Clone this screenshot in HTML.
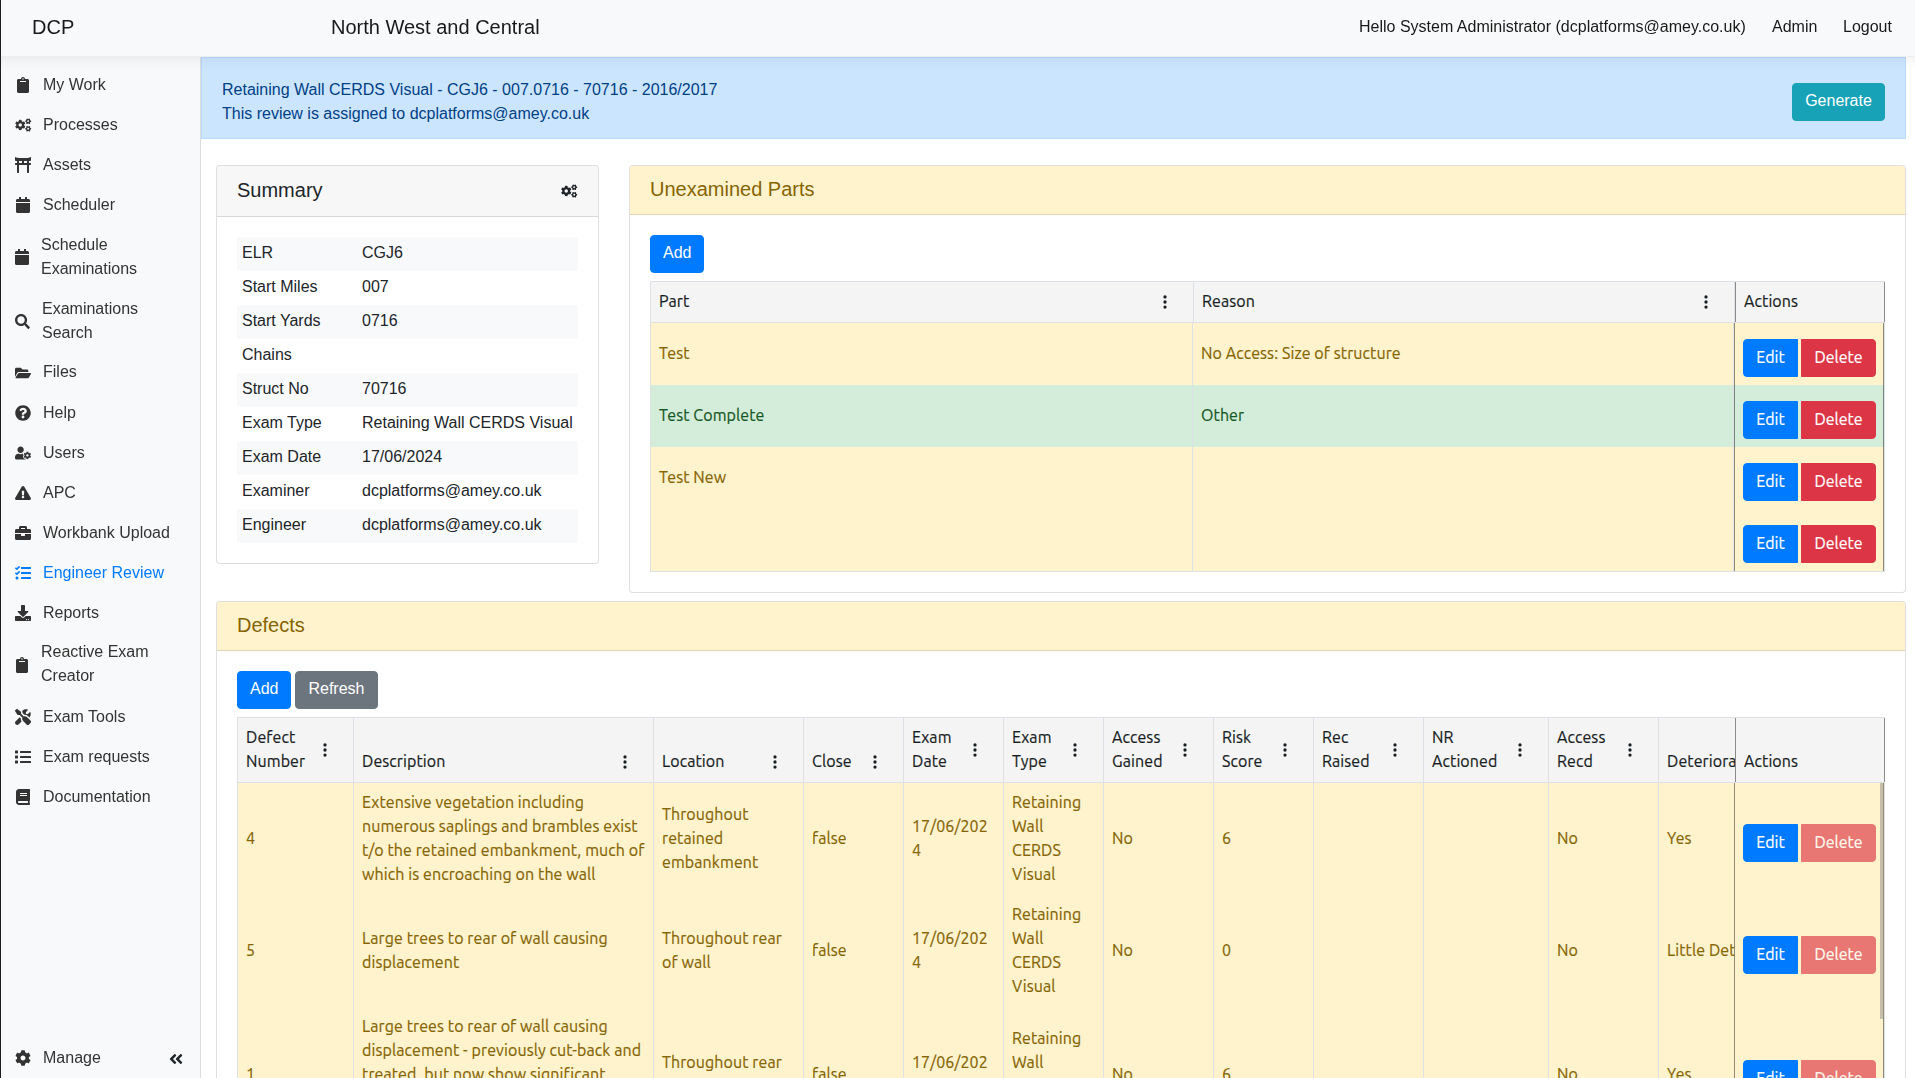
<!DOCTYPE html>
<html lang="en"><head><meta charset="utf-8"><title>DCP - Engineer Review</title>
<style>
*{box-sizing:border-box}
html,body{margin:0;padding:0}
html{overflow:hidden}
body{width:1915px;height:1078px;overflow:hidden;position:relative;background:#fff;color:#212529;
 font-family:"Liberation Sans",Arial,sans-serif;font-size:16px;line-height:24px}
#root{position:absolute;left:0;top:0;width:1915px;height:1078px;overflow:hidden}
a{text-decoration:none;color:inherit}
#edge{position:absolute;left:0;top:0;width:1px;height:1078px;background:#1f1f1f;z-index:30}
#nav{will-change:transform;position:absolute;left:-39px;top:0;width:1994px;height:57px;border-bottom:1px solid #eceef0;background:#f8f9fa;z-index:20;
 box-shadow:0 4px 12px rgba(0,0,0,.055)}
#nav>*{position:absolute;white-space:nowrap}
.brand{left:71px;top:12px;font-size:20px;line-height:30px;color:rgba(0,0,0,.9)}
.region{left:370px;top:12px;font-size:20px;line-height:30px;color:rgba(0,0,0,.9)}
.hello{left:1398px;top:15px;color:rgba(0,0,0,.9)}
.nl{top:15px;color:rgba(0,0,0,.9);margin-left:-1px}
#side{will-change:transform;position:absolute;left:1px;top:56px;width:200px;height:1022px;background:#f8f9fa;border-right:1px solid #dcdddf;z-index:5}
.ni{position:absolute;left:0;width:199px;display:block;color:#333}
svg{overflow:visible}
.ni .ic{position:absolute;left:14px;top:50%;margin-top:-7px;width:16px;height:16px;fill:#333}
.ni span{position:absolute;left:42px;top:9px;white-space:nowrap}
.ni.two .ic{left:13px}
.ni.two span{left:40px}
.ni.act{color:#007bff}
.ni.act .ic{fill:#007bff}
.coll{position:absolute;left:167px;top:995px;width:16px;height:16px;fill:#212529}
#main{position:absolute;left:0;top:0;width:1915px;height:1078px}
#alert{position:absolute;left:201px;top:57px;width:1705px;height:82px;background:#cce5ff;border:1px solid #b8daff;color:#004085}
#alert .tx{position:absolute;left:20px;top:20px;white-space:nowrap}
.btn{display:inline-block;font:inherit;font-size:16px;line-height:24px;padding:5px 12px 7px;border:1px solid transparent;border-radius:4px;color:#fff;text-align:center;vertical-align:middle;white-space:nowrap;margin:0}
.bp{background:#007bff;border-color:#007bff}
.bd{background:#dc3545;border-color:#dc3545}
.bi{background:#17a2b8;border-color:#17a2b8}
.bs{background:#6c757d;border-color:#6c757d}
.dis{opacity:.65}
#alert .bi{position:absolute;left:1590px;top:25px;width:93px;height:38px}
.card{position:absolute;background:#fff;border:1px solid rgba(0,0,0,.125);border-radius:4px}
.ch{height:49px;padding:12px 20px;background:rgba(0,0,0,.03);border-bottom:1px solid rgba(0,0,0,.125);border-radius:3px 3px 0 0;position:relative}
.ch h5{margin:0;font-size:20px;line-height:24px;font-weight:500}
.cb{padding:20px;position:relative}
.warn .ch{background:#fff3cd;color:#856404;padding-top:11px}
#summary{left:216px;top:165px;width:383px;height:399px}
#summary .ch{height:51px}
.hcog{position:absolute;right:21px;top:17px;width:16px;height:16px;fill:#212529}
#summary table{border-collapse:collapse;width:341px}
#summary td{height:34px;padding:4px 5px 6px;vertical-align:middle;white-space:nowrap}
#summary td.k{width:120px}
#summary tr:nth-child(odd){background:#f8f9fa}
#unex{left:629px;top:165px;width:1277px;height:428px}
#defects{left:216px;top:601px;width:1690px;height:600px}
.grid{position:relative;margin-top:8px;border:1px solid #dde1e6;font-family:Ubuntu,"Liberation Sans",sans-serif;font-size:16px;line-height:24px;background:#fff;letter-spacing:.09px;-webkit-text-stroke:.2px}
#g1{width:1235px;height:291px}
#g2{width:1648px;height:500px}
.hd{position:absolute;left:0;top:0;background:#f4f4f4;border-bottom:1px solid #dde1e6;color:#181d1f;z-index:3}
.h{position:absolute;top:0;bottom:0;border-right:1px solid #dde1e6;overflow:hidden}
.h .t{position:absolute;left:8px;bottom:9px;white-space:nowrap}
.mn{position:absolute;right:25.7px;width:4px;height:14px;fill:#181d1f;bottom:13px}
.mn.m2{bottom:25px}
.r{position:absolute;left:0;background:#fff3cd;color:#856404}
.r.ok{background:#d4edda;color:#155724}
.c{position:absolute;top:0;bottom:0;border-right:1px solid #dde1e6;overflow:hidden;display:flex;align-items:center;padding:0 8px 2px}
.c span{white-space:nowrap}
.pin{position:absolute;right:0;top:0;bottom:0;width:150px;border-left:1px solid rgba(0,0,0,.43);border-right:1px solid rgba(0,0,0,.43);background:inherit;display:flex;align-items:center;padding-left:8px;padding-top:8px;font-size:0;z-index:2}
.pin .btn{font-family:inherit;height:38px;padding-top:5px;padding-bottom:7px}
.pin .bp{width:55px;border-radius:4px 0 0 4px;padding-left:0;padding-right:0}
.pin .bd{width:75px;border-radius:0 4px 4px 0;margin-left:3px;padding-left:0;padding-right:0}
.pinh{left:auto;right:0;width:150px;border-left:1px solid rgba(0,0,0,.43);border-right:1px solid rgba(0,0,0,.43);background:#f4f4f4}
.thumb{position:absolute;left:1642px;top:65px;width:3px;height:236px;background:rgba(128,128,128,.45);z-index:4}

</style></head>
<body>
<div id="root">
<div id="edge"></div>
<nav id="nav">
<a class="brand">DCP</a>
<span class="region">North West and Central</span>
<span class="hello">Hello System Administrator (dcplatforms@amey.co.uk)</span>
<a class="nl" style="left:1812px">Admin</a>
<a class="nl" style="left:1883px">Logout</a>
</nav>
<aside id="side">
<a class="ni" style="top:8px;height:40px"><svg class="ic" viewBox="0 0 384 512"><path d="M384 112v352c0 26.51-21.49 48-48 48H48c-26.51 0-48-21.49-48-48V112c0-26.51 21.49-48 48-48h80c0-35.29 28.71-64 64-64s64 28.71 64 64h80c26.51 0 48 21.49 48 48zM192 40c-13.255 0-24 10.745-24 24s10.745 24 24 24 24-10.745 24-24-10.745-24-24-24m96 114v-20a6 6 0 0 0-6-6H102a6 6 0 0 0-6 6v20a6 6 0 0 0 6 6h180a6 6 0 0 0 6-6z"/></svg><span>My Work</span></a>
<a class="ni" style="top:48px;height:40px"><svg class="ic" viewBox="0 0 640 512"><g transform="translate(-6 40) scale(.845)"><path d="M487.4 315.7l-42.6-24.6c4.3-23.2 4.3-47 0-70.2l42.6-24.6c4.9-2.8 7.1-8.6 5.5-14-11.1-35.600-30-67.800-54.7-94.600-3.800-4.100-10-5.100-14.800-2.300L380.800 110c-17.900-15.400-38.500-27.300-60.800-35.100V25.800c0-5.600-3.900-10.500-9.400-11.700-36.700-8.200-74.300-7.800-109.200 0-5.500 1.200-9.400 6.100-9.400 11.700V75c-22.200 7.900-42.800 19.800-60.800 35.100L88.700 85.500c-4.900-2.800-11-1.900-14.800 2.300-24.700 26.700-43.600 58.900-54.700 94.600-1.700 5.400.6 11.200 5.500 14L67.300 221c-4.300 23.200-4.300 47 0 70.200l-42.600 24.600c-4.900 2.800-7.100 8.600-5.500 14 11.100 35.600 30 67.800 54.700 94.600 3.800 4.100 10 5.100 14.800 2.300l42.600-24.600c17.900 15.400 38.500 27.300 60.800 35.100v49.200c0 5.600 3.900 10.500 9.400 11.700 36.700 8.200 74.300 7.800 109.200 0 5.500-1.200 9.400-6.100 9.400-11.700v-49.200c22.200-7.900 42.800-19.800 60.800-35.100l42.600 24.600c4.900 2.800 11 1.900 14.800-2.300 24.700-26.700 43.600-58.900 54.700-94.600 1.500-5.500-.7-11.300-5.600-14.100zM256 336c-44.100 0-80-35.900-80-80s35.900-80 80-80 80 35.900 80 80-35.900 80-80 80z"/></g><g transform="translate(407.3 -12.7) scale(.474) rotate(90 256 256)"><path d="M487.4 315.7l-42.6-24.6c4.3-23.2 4.3-47 0-70.2l42.6-24.6c4.9-2.8 7.1-8.6 5.5-14-11.1-35.600-30-67.800-54.7-94.600-3.800-4.100-10-5.100-14.800-2.300L380.800 110c-17.900-15.400-38.500-27.300-60.800-35.100V25.800c0-5.600-3.900-10.500-9.400-11.700-36.700-8.200-74.300-7.800-109.200 0-5.500 1.200-9.400 6.100-9.400 11.700V75c-22.200 7.900-42.800 19.800-60.800 35.100L88.700 85.500c-4.900-2.800-11-1.900-14.800 2.300-24.700 26.700-43.600 58.900-54.700 94.600-1.700 5.400.6 11.200 5.500 14L67.300 221c-4.300 23.200-4.300 47 0 70.200l-42.600 24.600c-4.900 2.800-7.100 8.600-5.500 14 11.100 35.600 30 67.800 54.700 94.600 3.800 4.100 10 5.100 14.800 2.300l42.600-24.600c17.900 15.400 38.500 27.300 60.800 35.100v49.200c0 5.600 3.900 10.500 9.400 11.700 36.700 8.200 74.300 7.800 109.200 0 5.500-1.200 9.400-6.100 9.400-11.700v-49.200c22.200-7.900 42.800-19.800 60.800-35.100l42.600 24.600c4.900 2.800 11 1.900 14.800-2.300 24.700-26.700 43.600-58.900 54.700-94.600 1.500-5.500-.7-11.300-5.600-14.100zM256 336c-44.100 0-80-35.900-80-80s35.900-80 80-80 80 35.900 80 80-35.900 80-80 80z"/></g><g transform="translate(407.3 283.3) scale(.474) rotate(90 256 256)"><path d="M487.4 315.7l-42.6-24.6c4.3-23.2 4.3-47 0-70.2l42.6-24.6c4.9-2.8 7.1-8.6 5.5-14-11.1-35.600-30-67.800-54.7-94.600-3.800-4.100-10-5.100-14.800-2.300L380.800 110c-17.900-15.400-38.500-27.300-60.800-35.100V25.800c0-5.600-3.900-10.500-9.400-11.700-36.700-8.200-74.300-7.800-109.200 0-5.500 1.200-9.400 6.100-9.400 11.700V75c-22.200 7.900-42.800 19.800-60.800 35.100L88.700 85.500c-4.900-2.800-11-1.900-14.800 2.300-24.700 26.700-43.600 58.900-54.700 94.600-1.700 5.400.6 11.200 5.500 14L67.300 221c-4.300 23.200-4.300 47 0 70.200l-42.600 24.600c-4.900 2.800-7.100 8.600-5.500 14 11.100 35.600 30 67.800 54.700 94.600 3.800 4.100 10 5.100 14.800 2.300l42.600-24.600c17.900 15.400 38.500 27.300 60.800 35.100v49.200c0 5.600 3.900 10.500 9.400 11.700 36.700 8.200 74.300 7.800 109.200 0 5.500-1.200 9.400-6.100 9.400-11.700v-49.200c22.200-7.900 42.800-19.800 60.800-35.100l42.600 24.600c4.900 2.800 11 1.900 14.800-2.300 24.700-26.700 43.600-58.900 54.700-94.600 1.500-5.500-.7-11.300-5.600-14.100zM256 336c-44.100 0-80-35.900-80-80s35.900-80 80-80 80 35.900 80 80-35.900 80-80 80z"/></g></svg><span>Processes</span></a>
<a class="ni" style="top:88px;height:40px"><svg class="ic" viewBox="0 0 512 512"><path d="M376.45 32h-240.9A303.17 303.17 0 0 1 0 0v96c0 17.67 14.33 32 32 32h32v64H16c-8.84 0-16 7.16-16 16v32c0 8.84 7.16 16 16 16h48v240c0 8.84 7.16 16 16 16h32c8.84 0 16-7.16 16-16V256h256v240c0 8.84 7.16 16 16 16h32c8.84 0 16-7.16 16-16V256h48c8.84 0 16-7.16 16-16v-32c0-8.84-7.16-16-16-16h-48v-64h32c17.67 0 32-14.33 32-32V0a303.17 303.17 0 0 1-135.55 32zM128 128h96v64h-96v-64zm256 64h-96v-64h96v64z"/></svg><span>Assets</span></a>
<a class="ni" style="top:128px;height:40px"><svg class="ic" viewBox="0 0 448 512"><path d="M12 192h424c6.6 0 12 5.4 12 12v260c0 26.5-21.5 48-48 48H48c-26.5 0-48-21.5-48-48V204c0-6.6 5.4-12 12-12zm436-44v-36c0-26.5-21.5-48-48-48h-48V12c0-6.6-5.4-12-12-12h-40c-6.6 0-12 5.4-12 12v52H160V12c0-6.6-5.4-12-12-12h-40c-6.6 0-12 5.4-12 12v52H48C21.5 64 0 85.5 0 112v36c0 6.6 5.4 12 12 12h424c6.6 0 12-5.4 12-12z"/></svg><span>Scheduler</span></a>
<a class="ni two" style="top:168px;height:64px"><svg class="ic" viewBox="0 0 448 512"><path d="M12 192h424c6.6 0 12 5.4 12 12v260c0 26.5-21.5 48-48 48H48c-26.5 0-48-21.5-48-48V204c0-6.6 5.4-12 12-12zm436-44v-36c0-26.5-21.5-48-48-48h-48V12c0-6.6-5.4-12-12-12h-40c-6.6 0-12 5.4-12 12v52H160V12c0-6.6-5.4-12-12-12h-40c-6.6 0-12 5.4-12 12v52H48C21.5 64 0 85.5 0 112v36c0 6.6 5.4 12 12 12h424c6.6 0 12-5.4 12-12z"/></svg><span>Schedule<br>Examinations</span></a>
<a class="ni two" style="top:232px;height:64px"><svg class="ic" style="left:14px;width:14.9px;height:14.9px;margin-top:-6.3px" viewBox="0 0 512 512"><path d="M505 442.7L405.300 343c-4.500-4.500-10.600-7-17-7H372c27.600-35.300 44-79.700 44-128C416 93.100 322.900 0 208 0S0 93.100 0 208s93.100 208 208 208c48.300 0 92.700-16.400 128-44v16.300c0 6.400 2.500 12.500 7 17l99.700 99.700c9.400 9.400 24.600 9.400 33.900 0l28.300-28.300c9.400-9.400 9.400-24.600.1-34zM208 336c-70.700 0-128-57.200-128-128 0-70.700 57.200-128 128-128 70.700 0 128 57.200 128 128 0 70.700-57.200 128-128 128z"/></svg><span style="left:41px">Examinations<br>Search</span></a>
<a class="ni" style="top:296px;height:40px"><svg class="ic" viewBox="0 0 576 512"><path d="M572.694 292.093L500.27 416.248A63.997 63.997 0 0 1 444.989 448H45.025c-18.523 0-30.064-20.093-20.731-36.093l72.424-124.155A64 64 0 0 1 152 256h399.964c18.523 0 30.064 20.093 20.730 36.093zM152 224h328v-48c0-26.510-21.490-48-48-48H272l-64-64H48C21.490 64 0 85.490 0 112v278.046l69.077-118.418C86.214 242.250 117.989 224 152 224z"/></svg><span style="top:8px">Files</span></a>
<a class="ni" style="top:336px;height:40px"><svg class="ic" viewBox="0 0 512 512"><path d="M504 256c0 136.997-111.043 248-248 248S8 392.997 8 256C8 119.083 119.043 8 256 8s248 111.083 248 248zM262.655 90c-54.497 0-89.255 22.957-116.549 63.758-3.536 5.286-2.353 12.415 2.715 16.258l34.699 26.310c5.205 3.947 12.621 3.008 16.665-2.122 17.864-22.658 30.113-35.797 57.303-35.797 20.429 0 45.698 13.148 45.698 32.958 0 14.976-12.363 22.667-32.534 33.976C247.128 238.528 216 254.941 216 296v4c0 6.627 5.373 12 12 12h56c6.627 0 12-5.373 12-12v-1.333c0-28.462 83.186-29.647 83.186-106.667 0-58.002-60.165-102-116.531-102zM256 338c-25.365 0-46 20.635-46 46 0 25.364 20.635 46 46 46s46-20.636 46-46c0-25.365-20.635-46-46-46z"/></svg><span>Help</span></a>
<a class="ni" style="top:376px;height:40px"><svg class="ic" viewBox="0 0 640 512"><path d="M610.5 373.3c2.6-14.1 2.6-28.5 0-42.600l25.800-14.900c3-1.700 4.300-5.200 3.300-8.500-6.700-21.600-18.200-41.200-33.200-57.400-2.300-2.500-6-3.100-9-1.400l-25.800 14.900c-10.900-9.300-23.400-16.500-36.900-21.300v-29.800c0-3.400-2.400-6.400-5.700-7.100-22.300-5-45-4.800-66.200 0-3.300.7-5.700 3.700-5.700 7.100v29.800c-13.500 4.800-26 12-36.900 21.300l-25.800-14.900c-2.900-1.700-6.700-1.100-9 1.400-15 16.200-26.500 35.800-33.200 57.400-1 3.300.4 6.800 3.300 8.500l25.800 14.900c-2.600 14.100-2.600 28.500 0 42.600l-25.800 14.900c-3 1.700-4.300 5.200-3.300 8.500 6.700 21.600 18.200 41.100 33.200 57.400 2.300 2.500 6 3.100 9 1.400l25.800-14.900c10.900 9.300 23.400 16.500 36.900 21.300v29.800c0 3.400 2.400 6.400 5.700 7.100 22.300 5 45 4.800 66.200 0 3.300-.7 5.700-3.700 5.700-7.100v-29.800c13.500-4.800 26-12 36.900-21.300l25.800 14.900c2.900 1.700 6.700 1.100 9-1.400 15-16.200 26.500-35.800 33.200-57.400 1-3.300-.4-6.800-3.300-8.500l-25.800-14.900zM496 400.500c-26.800 0-48.500-21.800-48.500-48.500s21.800-48.500 48.500-48.500 48.500 21.800 48.500 48.500-21.700 48.500-48.500 48.500zM224 256c70.700 0 128-57.300 128-128S294.700 0 224 0 96 57.300 96 128s57.300 128 128 128zm201.200 226.500c-2.300-1.200-4.600-2.600-6.800-3.900l-7.900 4.600c-6 3.400-12.800 5.300-19.600 5.300-10.900 0-21.400-4.600-28.900-12.600-18.300-19.800-32.300-43.900-40.200-69.600-5.500-17.700 1.900-36.400 17.900-45.700l7.900-4.600c-.1-2.600-.1-5.200 0-7.800l-7.900-4.600c-16-9.200-23.400-28-17.900-45.700.9-2.900 2.200-5.800 3.200-8.700-3.800-.3-7.500-1.200-11.400-1.200h-16.700c-22.200 10.200-46.900 16-72.900 16s-50.600-5.800-72.900-16h-16.700C60.200 288 0 348.200 0 422.400V464c0 26.500 21.500 48 48 48h352c10.100 0 19.500-3.200 27.200-8.500-1.200-3.800-2-7.700-2-11.800v-9.200z"/></svg><span>Users</span></a>
<a class="ni" style="top:416px;height:40px"><svg class="ic" viewBox="0 0 576 512"><path d="M569.517 440.013C587.975 472.007 564.806 512 527.940 512H48.054c-36.937 0-59.999-40.055-41.577-71.987L246.423 23.985c18.467-32.009 64.720-31.951 83.154 0l239.940 416.028zM288 354c-25.405 0-46 20.595-46 46s20.595 46 46 46 46-20.595 46-46-20.595-46-46-46zm-43.673-165.346l7.418 136c.347 6.364 5.609 11.346 11.982 11.346h48.546c6.373 0 11.635-4.982 11.982-11.346l7.418-136c.375-6.874-5.098-12.654-11.982-12.654h-63.383c-6.884 0-12.356 5.780-11.981 12.654z"/></svg><span>APC</span></a>
<a class="ni" style="top:456px;height:40px"><svg class="ic" viewBox="0 0 512 512"><path d="M320 336c0 8.840-7.160 16-16 16h-96c-8.840 0-16-7.160-16-16v-48H0v144c0 25.600 22.400 48 48 48h416c25.600 0 48-22.400 48-48V288H320v48zm144-208h-80V80c0-25.600-22.400-48-48-48H176c-25.600 0-48 22.400-48 48v48H48c-25.600 0-48 22.400-48 48v80h512v-80c0-25.600-22.400-48-48-48zm-144 0H192V96h128v32z"/></svg><span>Workbank Upload</span></a>
<a class="ni act" style="top:496px;height:40px"><svg class="ic" viewBox="0 0 512 512"><path d="M139.610 35.500a12 12 0 0 0-17 0L58.930 98.810l-22.700-22.120a12 12 0 0 0-17 0L3.530 92.410a12 12 0 0 0 0 17l47.590 47.400a12.780 12.780 0 0 0 17.610 0l15.590-15.620L156.520 69a12.090 12.090 0 0 0 .09-17zm0 159.190a12 12 0 0 0-17 0l-63.680 63.720-22.700-22.100a12 12 0 0 0-17 0L3.530 252a12 12 0 0 0 0 17L51 316.500a12.770 12.770 0 0 0 17.600 0l15.700-15.690 72.200-72.220a12 12 0 0 0 .09-16.900zM64 368c-26.490 0-48.590 21.500-48.590 48S37.530 464 64 464a48 48 0 0 0 0-96zm432 16H208a16 16 0 0 0-16 16v32a16 16 0 0 0 16 16h288a16 16 0 0 0 16-16v-32a16 16 0 0 0-16-16zm0-320H208a16 16 0 0 0-16 16v32a16 16 0 0 0 16 16h288a16 16 0 0 0 16-16V80a16 16 0 0 0-16-16zm0 160H208a16 16 0 0 0-16 16v32a16 16 0 0 0 16 16h288a16 16 0 0 0 16-16v-32a16 16 0 0 0-16-16z"/></svg><span>Engineer Review</span></a>
<a class="ni" style="top:536px;height:40px"><svg class="ic" viewBox="0 0 512 512"><path d="M216 0h80c13.300 0 24 10.700 24 24v168h87.700c17.800 0 26.700 21.500 14.100 34.100L269.700 378.300c-7.500 7.500-19.800 7.500-27.300 0L90.100 226.100c-12.600-12.600-3.700-34.100 14.100-34.100H192V24c0-13.300 10.700-24 24-24zm296 376v112c0 13.300-10.700 24-24 24H24c-13.300 0-24-10.700-24-24V376c0-13.300 10.700-24 24-24h146.700l49 49c20.100 20.100 52.500 20.100 72.600 0l49-49H488c13.300 0 24 10.700 24 24zm-124 88c0-11-9-20-20-20s-20 9-20 20 9 20 20 20 20-9 20-20zm64 0c0-11-9-20-20-20s-20 9-20 20 9 20 20 20 20-9 20-20z"/></svg><span>Reports</span></a>
<a class="ni two" style="top:576px;height:64px"><svg class="ic" viewBox="0 0 384 512"><path d="M384 112v352c0 26.51-21.49 48-48 48H48c-26.51 0-48-21.49-48-48V112c0-26.51 21.49-48 48-48h80c0-35.29 28.71-64 64-64s64 28.71 64 64h80c26.51 0 48 21.49 48 48zM192 40c-13.255 0-24 10.745-24 24s10.745 24 24 24 24-10.745 24-24-10.745-24-24-24m96 114v-20a6 6 0 0 0-6-6H102a6 6 0 0 0-6 6v20a6 6 0 0 0 6 6h180a6 6 0 0 0 6-6z"/></svg><span style="top:8px">Reactive Exam<br>Creator</span></a>
<a class="ni" style="top:640px;height:40px"><svg class="ic" viewBox="32 -9 512 530"><path d="M70.8-6.7c5.4-5.4 13.8-6.2 20.2-2l118.9 79.2c8.9 5.9 14.2 15.9 14.2 26.6v49.6l90.8 90.8c33.3-15 73.9-8.9 101.2 18.5l126.1 126.1c18.7 18.7 18.7 49.1 0 67.9l-60.1 60.1c-18.7 18.7-49.1 18.7-67.9 0L288.1 384c-27.4-27.4-33.5-67.9-18.5-101.2L178.8 192h-49.6c-10.7 0-20.7-5.3-26.6-14.2L23.4 58.9c-4.2-6.3-3.4-14.8 2-20.2zm145 303.5c-6.3 36.9 2.3 75.9 26.2 107.2l-94.9 95c-28.1 28.1-73.7 28.1-101.8 0s-28.1-73.7 0-101.8l135.4-135.5 35.2 35.1zM384.1 0c20.1 0 39.4 3.7 57.1 10.5 10 3.8 11.8 16.5 4.3 24.1l-56.7 56.7c-3 3-4.7 7.1-4.7 11.3V144c0 8.8 7.2 16 16 16h41.4c4.2 0 8.3-1.7 11.3-4.7l56.7-56.7c7.6-7.5 20.3-5.7 24.1 4.3 6.8 17.7 10.5 37 10.5 57.1 0 43.2-17.2 82.3-45 111.1L450 222c-33.1-33-78.5-45.7-121.1-38.4l-56.8-56.8V97.1l-.2-5c-.8-12.4-4.4-24.3-10.5-34.9C290.8 22.2 334.8 0 384.1-.1z"/></svg><span>Exam Tools</span></a>
<a class="ni" style="top:680px;height:40px"><svg class="ic" viewBox="0 0 512 512"><path d="M80 368H16a16 16 0 0 0-16 16v64a16 16 0 0 0 16 16h64a16 16 0 0 0 16-16v-64a16 16 0 0 0-16-16zm0-320H16A16 16 0 0 0 0 64v64a16 16 0 0 0 16 16h64a16 16 0 0 0 16-16V64a16 16 0 0 0-16-16zm0 160H16a16 16 0 0 0-16 16v64a16 16 0 0 0 16 16h64a16 16 0 0 0 16-16v-64a16 16 0 0 0-16-16zm416 176H176a16 16 0 0 0-16 16v32a16 16 0 0 0 16 16h320a16 16 0 0 0 16-16v-32a16 16 0 0 0-16-16zm0-320H176a16 16 0 0 0-16 16v32a16 16 0 0 0 16 16h320a16 16 0 0 0 16-16V80a16 16 0 0 0-16-16zm0 160H176a16 16 0 0 0-16 16v32a16 16 0 0 0 16 16h320a16 16 0 0 0 16-16v-32a16 16 0 0 0-16-16z"/></svg><span>Exam requests</span></a>
<a class="ni" style="top:720px;height:40px"><svg class="ic" viewBox="0 0 448 512"><path d="M448 360V24c0-13.300-10.700-24-24-24H96C43 0 0 43 0 96v320c0 53 43 96 96 96h328c13.300 0 24-10.700 24-24v-16c0-7.500-3.500-14.300-8.900-18.700-4.200-15.400-4.200-59.300 0-74.700 5.400-4.300 8.900-11.100 8.900-18.600zM128 134c0-3.300 2.700-6 6-6h212c3.300 0 6 2.700 6 6v20c0 3.300-2.700 6-6 6H134c-3.300 0-6-2.700-6-6v-20zm0 64c0-3.300 2.700-6 6-6h212c3.300 0 6 2.700 6 6v20c0 3.300-2.700 6-6 6H134c-3.300 0-6-2.700-6-6v-20zm253.400 250H96c-17.700 0-32-14.300-32-32 0-17.600 14.400-32 32-32h285.400c-1.900 17.100-1.900 46.900 0 64z"/></svg><span>Documentation</span></a>
<a class="ni" style="top:981px;height:40px"><svg class="ic" viewBox="0 0 512 512"><path d="M487.4 315.7l-42.6-24.6c4.3-23.2 4.3-47 0-70.2l42.6-24.6c4.9-2.8 7.1-8.6 5.5-14-11.1-35.600-30-67.800-54.7-94.600-3.800-4.100-10-5.100-14.800-2.300L380.800 110c-17.900-15.400-38.500-27.300-60.800-35.100V25.800c0-5.600-3.900-10.500-9.400-11.700-36.700-8.200-74.300-7.800-109.200 0-5.500 1.200-9.400 6.100-9.400 11.700V75c-22.200 7.900-42.800 19.800-60.800 35.100L88.700 85.500c-4.900-2.800-11-1.900-14.800 2.300-24.700 26.700-43.600 58.900-54.700 94.600-1.700 5.400.6 11.200 5.500 14L67.300 221c-4.300 23.200-4.300 47 0 70.200l-42.600 24.600c-4.900 2.800-7.100 8.600-5.500 14 11.100 35.600 30 67.800 54.700 94.600 3.800 4.100 10 5.100 14.800 2.300l42.600-24.600c17.900 15.400 38.500 27.300 60.800 35.100v49.200c0 5.600 3.900 10.500 9.400 11.700 36.700 8.200 74.300 7.800 109.200 0 5.500-1.200 9.400-6.100 9.400-11.700v-49.200c22.200-7.900 42.800-19.800 60.800-35.100l42.600 24.600c4.900 2.800 11 1.900 14.800-2.300 24.700-26.700 43.600-58.900 54.700-94.600 1.500-5.500-.7-11.300-5.600-14.100zM256 336c-44.100 0-80-35.900-80-80s35.900-80 80-80 80 35.900 80 80-35.900 80-80 80z"/></svg><span>Manage</span></a>
<svg class="coll" viewBox="0 0 448 512"><path d="M223.700 239l136-136c9.400-9.400 24.600-9.400 33.900 0l22.600 22.600c9.400 9.400 9.400 24.600 0 33.900L319.900 256l96.400 96.400c9.400 9.400 9.400 24.600 0 33.900L393.700 409c-9.400 9.400-24.600 9.400-33.900 0l-136-136c-9.500-9.400-9.500-24.600-.1-34zm-192 34l136 136c9.400 9.400 24.600 9.400 33.900 0l22.600-22.600c9.400-9.400 9.400-24.600 0-33.900L127.900 256l96.400-96.400c9.400-9.400 9.400-24.600 0-33.900L201.700 103c-9.400-9.400-24.600-9.400-33.900 0l-136 136c-9.500 9.400-9.500 24.600-.1 34z"/></svg>
</aside>
<main id="main">
<div id="alert"><div class="tx">Retaining Wall CERDS Visual - CGJ6 - 007.0716 - 70716 - 2016/2017<br>This review is assigned to dcplatforms@amey.co.uk</div><button class="btn bi">Generate</button></div>

<section class="card" id="summary">
<div class="ch"><h5>Summary</h5><svg class="hcog" viewBox="0 0 640 512"><g transform="translate(-6 40) scale(.845)"><path d="M487.4 315.7l-42.6-24.6c4.3-23.2 4.3-47 0-70.2l42.6-24.6c4.9-2.8 7.1-8.6 5.5-14-11.1-35.600-30-67.800-54.7-94.600-3.800-4.100-10-5.100-14.800-2.300L380.800 110c-17.900-15.400-38.500-27.300-60.800-35.100V25.800c0-5.600-3.900-10.500-9.400-11.700-36.700-8.200-74.300-7.800-109.200 0-5.500 1.200-9.400 6.100-9.400 11.700V75c-22.200 7.900-42.800 19.800-60.800 35.100L88.700 85.500c-4.900-2.800-11-1.900-14.800 2.300-24.700 26.700-43.600 58.900-54.700 94.600-1.700 5.400.6 11.200 5.500 14L67.300 221c-4.300 23.200-4.300 47 0 70.200l-42.600 24.600c-4.900 2.800-7.100 8.600-5.500 14 11.100 35.600 30 67.800 54.700 94.600 3.800 4.100 10 5.100 14.800 2.300l42.600-24.600c17.900 15.400 38.500 27.300 60.800 35.100v49.200c0 5.600 3.900 10.500 9.400 11.700 36.700 8.200 74.300 7.800 109.200 0 5.500-1.200 9.400-6.100 9.400-11.700v-49.200c22.200-7.900 42.800-19.800 60.800-35.100l42.600 24.600c4.900 2.800 11 1.900 14.800-2.300 24.700-26.700 43.600-58.900 54.700-94.600 1.500-5.500-.7-11.300-5.600-14.100zM256 336c-44.100 0-80-35.900-80-80s35.900-80 80-80 80 35.900 80 80-35.900 80-80 80z"/></g><g transform="translate(407.3 -12.7) scale(.474) rotate(90 256 256)"><path d="M487.4 315.7l-42.6-24.6c4.3-23.2 4.3-47 0-70.2l42.6-24.6c4.9-2.8 7.1-8.6 5.5-14-11.1-35.600-30-67.800-54.7-94.600-3.800-4.100-10-5.100-14.800-2.300L380.800 110c-17.900-15.400-38.500-27.300-60.800-35.100V25.800c0-5.600-3.900-10.500-9.400-11.700-36.700-8.200-74.300-7.800-109.200 0-5.500 1.200-9.400 6.100-9.400 11.700V75c-22.200 7.900-42.800 19.800-60.800 35.100L88.700 85.500c-4.900-2.800-11-1.900-14.800 2.300-24.700 26.700-43.600 58.900-54.700 94.600-1.700 5.400.6 11.200 5.500 14L67.300 221c-4.300 23.200-4.300 47 0 70.200l-42.600 24.600c-4.900 2.800-7.100 8.600-5.500 14 11.100 35.600 30 67.800 54.700 94.600 3.800 4.100 10 5.100 14.800 2.300l42.600-24.600c17.900 15.400 38.500 27.300 60.800 35.100v49.200c0 5.600 3.900 10.500 9.400 11.700 36.700 8.200 74.300 7.800 109.200 0 5.500-1.200 9.400-6.100 9.400-11.700v-49.200c22.200-7.900 42.800-19.800 60.800-35.100l42.600 24.600c4.900 2.800 11 1.900 14.800-2.300 24.700-26.700 43.600-58.900 54.700-94.600 1.500-5.500-.7-11.300-5.600-14.100zM256 336c-44.100 0-80-35.900-80-80s35.900-80 80-80 80 35.900 80 80-35.900 80-80 80z"/></g><g transform="translate(407.3 283.3) scale(.474) rotate(90 256 256)"><path d="M487.4 315.7l-42.6-24.6c4.3-23.2 4.3-47 0-70.2l42.6-24.6c4.9-2.8 7.1-8.6 5.5-14-11.1-35.600-30-67.800-54.7-94.600-3.800-4.100-10-5.100-14.800-2.300L380.800 110c-17.900-15.400-38.500-27.300-60.800-35.100V25.800c0-5.600-3.900-10.500-9.400-11.700-36.700-8.200-74.300-7.800-109.200 0-5.500 1.200-9.400 6.100-9.400 11.700V75c-22.200 7.900-42.800 19.800-60.800 35.100L88.700 85.500c-4.900-2.800-11-1.900-14.800 2.300-24.700 26.700-43.600 58.900-54.700 94.600-1.700 5.400.6 11.200 5.500 14L67.300 221c-4.300 23.200-4.300 47 0 70.200l-42.600 24.600c-4.900 2.800-7.100 8.600-5.500 14 11.100 35.600 30 67.800 54.700 94.600 3.800 4.100 10 5.100 14.800 2.300l42.600-24.600c17.900 15.400 38.500 27.300 60.800 35.100v49.200c0 5.600 3.900 10.500 9.400 11.700 36.700 8.200 74.300 7.800 109.200 0 5.500-1.200 9.400-6.100 9.400-11.700v-49.200c22.200-7.900 42.800-19.800 60.800-35.100l42.600 24.600c4.900 2.800 11 1.900 14.800-2.300 24.700-26.700 43.600-58.900 54.700-94.600 1.500-5.500-.7-11.300-5.600-14.100zM256 336c-44.100 0-80-35.900-80-80s35.900-80 80-80 80 35.900 80 80-35.900 80-80 80z"/></g></svg></div>
<div class="cb"><table>
<tr><td class="k">ELR</td><td>CGJ6</td></tr>
<tr><td class="k">Start Miles</td><td>007</td></tr>
<tr><td class="k">Start Yards</td><td>0716</td></tr>
<tr><td class="k">Chains</td><td></td></tr>
<tr><td class="k">Struct No</td><td>70716</td></tr>
<tr><td class="k">Exam Type</td><td>Retaining Wall CERDS Visual</td></tr>
<tr><td class="k">Exam Date</td><td>17/06/2024</td></tr>
<tr><td class="k">Examiner</td><td>dcplatforms@amey.co.uk</td></tr>
<tr><td class="k">Engineer</td><td>dcplatforms@amey.co.uk</td></tr>
</table></div>
</section>

<section class="card warn" id="unex">
<div class="ch"><h5>Unexamined Parts</h5></div>
<div class="cb"><button class="btn bp">Add</button>
<div class="grid" id="g1">
<div class="hd" style="height:41px;width:1234px"><div class="h" style="left:0;width:543px"><span class="t">Part</span><svg class="mn" viewBox="0 0 4 14.2"><circle cx="2" cy="2" r="1.65"/><circle cx="2" cy="7.1" r="1.65"/><circle cx="2" cy="12.2" r="1.65"/></svg></div><div class="h" style="left:543px;width:541px"><span class="t">Reason</span><svg class="mn" viewBox="0 0 4 14.2"><circle cx="2" cy="2" r="1.65"/><circle cx="2" cy="7.1" r="1.65"/><circle cx="2" cy="12.2" r="1.65"/></svg></div><div class="h pinh"><span class="t">Actions</span></div></div>
<div class="r " style="top:41px;height:62px;width:1233px"><div class="c" style="left:0;width:542px"><span>Test</span></div><div class="c" style="left:542px;width:541px"><span>No Access: Size of structure</span></div><div class="pin"><button class="btn bp">Edit</button><button class="btn bd">Delete</button></div></div>
<div class="r ok" style="top:103px;height:62px;width:1233px"><div class="c" style="left:0;width:542px"><span>Test Complete</span></div><div class="c" style="left:542px;width:541px"><span>Other</span></div><div class="pin"><button class="btn bp">Edit</button><button class="btn bd">Delete</button></div></div>
<div class="r " style="top:165px;height:62px;width:1233px"><div class="c" style="left:0;width:542px"><span>Test New</span></div><div class="c" style="left:542px;width:541px"><span></span></div><div class="pin"><button class="btn bp">Edit</button><button class="btn bd">Delete</button></div></div>
<div class="r " style="top:227px;height:62px;width:1233px"><div class="c" style="left:0;width:542px"><span></span></div><div class="c" style="left:542px;width:541px"><span></span></div><div class="pin"><button class="btn bp">Edit</button><button class="btn bd">Delete</button></div></div>
</div></div>
</section>

<section class="card warn" id="defects">
<div class="ch"><h5>Defects</h5></div>
<div class="cb"><button class="btn bp">Add</button><button class="btn bs" style="margin-left:4px">Refresh</button>
<div class="grid" id="g2">
<div class="hd" style="height:65px;width:1647px"><div class="h" style="left:0px;width:116px"><span class="t">Defect<br>Number</span><svg class="mn m2" viewBox="0 0 4 14.2"><circle cx="2" cy="2" r="1.65"/><circle cx="2" cy="7.1" r="1.65"/><circle cx="2" cy="12.2" r="1.65"/></svg></div>
<div class="h" style="left:116px;width:300px"><span class="t">Description</span><svg class="mn" viewBox="0 0 4 14.2"><circle cx="2" cy="2" r="1.65"/><circle cx="2" cy="7.1" r="1.65"/><circle cx="2" cy="12.2" r="1.65"/></svg></div>
<div class="h" style="left:416px;width:150px"><span class="t">Location</span><svg class="mn" viewBox="0 0 4 14.2"><circle cx="2" cy="2" r="1.65"/><circle cx="2" cy="7.1" r="1.65"/><circle cx="2" cy="12.2" r="1.65"/></svg></div>
<div class="h" style="left:566px;width:100px"><span class="t">Close</span><svg class="mn" viewBox="0 0 4 14.2"><circle cx="2" cy="2" r="1.65"/><circle cx="2" cy="7.1" r="1.65"/><circle cx="2" cy="12.2" r="1.65"/></svg></div>
<div class="h" style="left:666px;width:100px"><span class="t">Exam<br>Date</span><svg class="mn m2" viewBox="0 0 4 14.2"><circle cx="2" cy="2" r="1.65"/><circle cx="2" cy="7.1" r="1.65"/><circle cx="2" cy="12.2" r="1.65"/></svg></div>
<div class="h" style="left:766px;width:100px"><span class="t">Exam<br>Type</span><svg class="mn m2" viewBox="0 0 4 14.2"><circle cx="2" cy="2" r="1.65"/><circle cx="2" cy="7.1" r="1.65"/><circle cx="2" cy="12.2" r="1.65"/></svg></div>
<div class="h" style="left:866px;width:110px"><span class="t">Access<br>Gained</span><svg class="mn m2" viewBox="0 0 4 14.2"><circle cx="2" cy="2" r="1.65"/><circle cx="2" cy="7.1" r="1.65"/><circle cx="2" cy="12.2" r="1.65"/></svg></div>
<div class="h" style="left:976px;width:100px"><span class="t">Risk<br>Score</span><svg class="mn m2" viewBox="0 0 4 14.2"><circle cx="2" cy="2" r="1.65"/><circle cx="2" cy="7.1" r="1.65"/><circle cx="2" cy="12.2" r="1.65"/></svg></div>
<div class="h" style="left:1076px;width:110px"><span class="t">Rec<br>Raised</span><svg class="mn m2" viewBox="0 0 4 14.2"><circle cx="2" cy="2" r="1.65"/><circle cx="2" cy="7.1" r="1.65"/><circle cx="2" cy="12.2" r="1.65"/></svg></div>
<div class="h" style="left:1186px;width:125px"><span class="t">NR<br>Actioned</span><svg class="mn m2" viewBox="0 0 4 14.2"><circle cx="2" cy="2" r="1.65"/><circle cx="2" cy="7.1" r="1.65"/><circle cx="2" cy="12.2" r="1.65"/></svg></div>
<div class="h" style="left:1311px;width:110px"><span class="t">Access<br>Recd</span><svg class="mn m2" viewBox="0 0 4 14.2"><circle cx="2" cy="2" r="1.65"/><circle cx="2" cy="7.1" r="1.65"/><circle cx="2" cy="12.2" r="1.65"/></svg></div>
<div class="h" style="left:1421px;width:120px"><span class="t">Deterioration</span><svg class="mn" viewBox="0 0 4 14.2"><circle cx="2" cy="2" r="1.65"/><circle cx="2" cy="7.1" r="1.65"/><circle cx="2" cy="12.2" r="1.65"/></svg></div><div class="h pinh"><span class="t">Actions</span></div></div>
<div class="r" style="top:65px;height:112px;width:1646px"><div class="c" style="left:0px;width:116px"><span>4</span></div><div class="c" style="left:116px;width:300px"><span>Extensive vegetation including<br>numerous saplings and brambles exist<br>t/o the retained embankment, much of<br>which is encroaching on the wall</span></div><div class="c" style="left:416px;width:150px"><span>Throughout<br>retained<br>embankment</span></div><div class="c" style="left:566px;width:100px"><span>false</span></div><div class="c" style="left:666px;width:100px"><span>17/06/202<br>4</span></div><div class="c" style="left:766px;width:100px"><span>Retaining<br>Wall<br>CERDS<br>Visual</span></div><div class="c" style="left:866px;width:110px"><span>No</span></div><div class="c" style="left:976px;width:100px"><span>6</span></div><div class="c" style="left:1076px;width:110px"><span></span></div><div class="c" style="left:1186px;width:125px"><span></span></div><div class="c" style="left:1311px;width:110px"><span>No</span></div><div class="c" style="left:1421px;width:120px"><span>Yes</span></div><div class="pin"><button class="btn bp">Edit</button><button class="btn bd dis">Delete</button></div></div>
<div class="r" style="top:177px;height:112px;width:1646px"><div class="c" style="left:0px;width:116px"><span>5</span></div><div class="c" style="left:116px;width:300px"><span>Large trees to rear of wall causing<br>displacement</span></div><div class="c" style="left:416px;width:150px"><span>Throughout rear<br>of wall</span></div><div class="c" style="left:566px;width:100px"><span>false</span></div><div class="c" style="left:666px;width:100px"><span>17/06/202<br>4</span></div><div class="c" style="left:766px;width:100px"><span>Retaining<br>Wall<br>CERDS<br>Visual</span></div><div class="c" style="left:866px;width:110px"><span>No</span></div><div class="c" style="left:976px;width:100px"><span>0</span></div><div class="c" style="left:1076px;width:110px"><span></span></div><div class="c" style="left:1186px;width:125px"><span></span></div><div class="c" style="left:1311px;width:110px"><span>No</span></div><div class="c" style="left:1421px;width:120px"><span>Little Deterioration</span></div><div class="pin"><button class="btn bp">Edit</button><button class="btn bd dis">Delete</button></div></div>
<div class="r" style="top:289px;height:136px;width:1646px"><div class="c" style="left:0px;width:116px"><span>1</span></div><div class="c" style="left:116px;width:300px"><span>Large trees to rear of wall causing<br>displacement - previously cut-back and<br>treated, but now show significant<br>regrowth which is continuing to<br>displace the wall</span></div><div class="c" style="left:416px;width:150px"><span>Throughout rear<br>of wall</span></div><div class="c" style="left:566px;width:100px"><span>false</span></div><div class="c" style="left:666px;width:100px"><span>17/06/202<br>4</span></div><div class="c" style="left:766px;width:100px"><span>Retaining<br>Wall<br>CERDS<br>Visual</span></div><div class="c" style="left:866px;width:110px"><span>No</span></div><div class="c" style="left:976px;width:100px"><span>6</span></div><div class="c" style="left:1076px;width:110px"><span></span></div><div class="c" style="left:1186px;width:125px"><span></span></div><div class="c" style="left:1311px;width:110px"><span>No</span></div><div class="c" style="left:1421px;width:120px"><span>Yes</span></div><div class="pin"><button class="btn bp">Edit</button><button class="btn bd dis">Delete</button></div></div>
<div class="thumb"></div>
</div></div>
</section>
</main>
</div>
</body></html>
